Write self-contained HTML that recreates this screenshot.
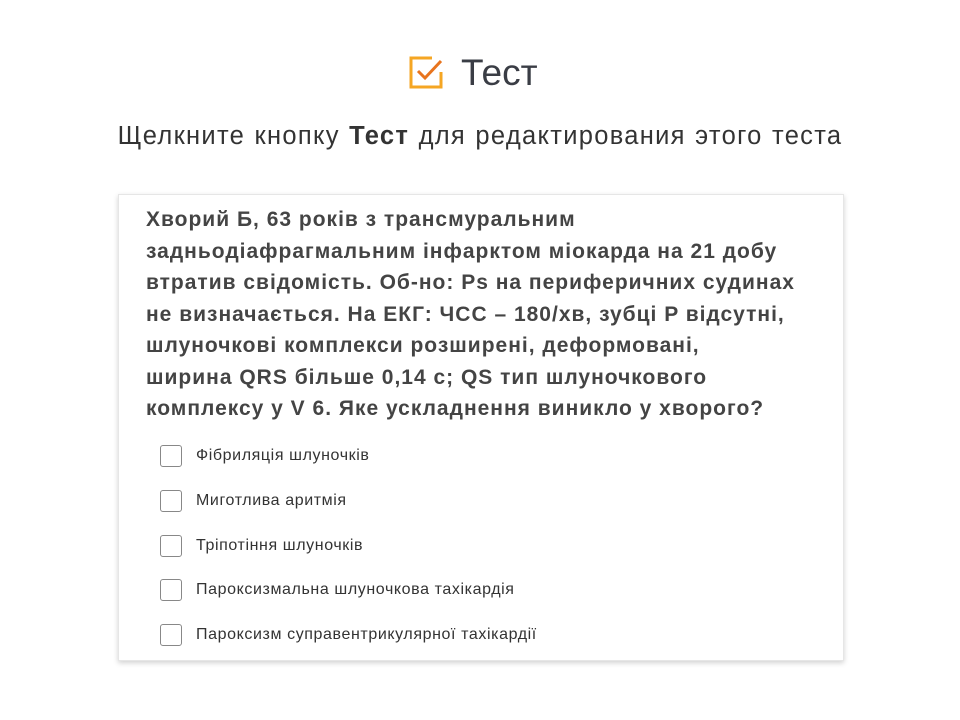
<!DOCTYPE html>
<html><head><meta charset="utf-8"><style>
body{margin:0;width:960px;height:720px;background:#fff;font-family:"Liberation Sans",sans-serif;color:#333;position:relative;overflow:hidden}
.t{position:absolute;left:461px;top:52px;font-size:37px;color:#3a3d45}
.ic{position:absolute;left:408px;top:54px}
.sub{position:absolute;left:0;width:960px;top:122px;text-align:center;font-size:25.5px;color:#333;letter-spacing:1.3px;word-spacing:1px}
.card{position:absolute;left:118px;top:194px;width:724px;height:465px;border:1px solid #e6e6e6;box-shadow:0 2px 5px rgba(0,0,0,.18);background:#fff}
.q{position:absolute;left:27px;top:9px;font-size:21px;letter-spacing:1px;font-weight:bold;line-height:31.5px;color:#444;white-space:nowrap}
.o{position:absolute;left:41px;height:24px;display:flex;align-items:center;font-size:16px;letter-spacing:0.6px;color:#333}
.o span.b{width:20px;height:20px;border:1.5px solid #888;border-radius:3px;margin-right:14px;display:inline-block;flex:none}
</style></head><body>
<svg class="ic" width="36" height="36" viewBox="0 0 36 36"><path d="M24 4H3v29h30V18" fill="none" stroke="#f5a623" stroke-width="3"/><path d="M10 17l7 7L33 7" fill="none" stroke="#e8741e" stroke-width="3"/></svg>
<div class="t">Тест</div>
<div class="sub">Щелкните кнопку <b>Тест</b> для редактирования этого теста</div>
<div class="card">
<div class="q">Хворий Б, 63 років з трансмуральним<br>задньодіафрагмальним інфарктом міокарда на 21 добу<br>втратив свідомість. Об-но: Ps на периферичних судинах<br>не визначається. На ЕКГ: ЧСС – 180/хв, зубці P відсутні,<br>шлуночкові комплекси розширені, деформовані,<br>ширина QRS більше 0,14 с; QS тип шлуночкового<br>комплексу у V 6. Яке ускладнення виникло у хворого?</div>
<div class="o" style="top:249px"><span class="b"></span>Фібриляція шлуночків</div>
<div class="o" style="top:294px"><span class="b"></span>Миготлива аритмія</div>
<div class="o" style="top:339px"><span class="b"></span>Тріпотіння шлуночків</div>
<div class="o" style="top:383px"><span class="b"></span>Пароксизмальна шлуночкова тахікардія</div>
<div class="o" style="top:428px"><span class="b"></span>Пароксизм суправентрикулярної тахікардії</div>
</div>
</body></html>
